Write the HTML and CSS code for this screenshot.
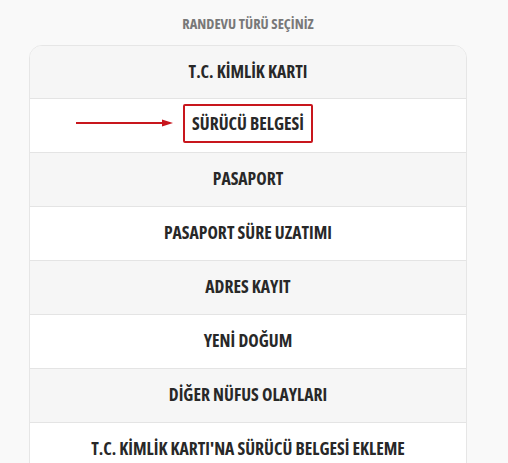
FILE: index.html
```html
<!DOCTYPE html>
<html lang="tr">
<head>
    <meta charset="UTF-8">
    <meta name="viewport" content="width=device-width, initial-scale=1.0">
    <title>Randevu Türü Seçiniz</title>
    <link rel="stylesheet" href="styles.css">
</head>
<body>
    <div class="page">
        <h1 class="page-title">RANDEVU TÜRÜ SEÇİNİZ</h1>
        <ul class="type-list">
            <li class="type-item">T.C. KİMLİK KARTI</li>
            <li class="type-item selected">
                <span class="arrow">
                    <svg width="98" height="10" viewBox="0 0 98 10">
                        <line x1="0" y1="5" x2="88" y2="5" stroke="#c8161d" stroke-width="2"/>
                        <path d="M86 1.5 L97 5 L86 8.5 Z" fill="#c8161d"/>
                    </svg>
                </span>
                <span class="mark">SÜRÜCÜ BELGESİ</span>
            </li>
            <li class="type-item">PASAPORT</li>
            <li class="type-item">PASAPORT SÜRE UZATIMI</li>
            <li class="type-item">ADRES KAYIT</li>
            <li class="type-item">YENİ DOĞUM</li>
            <li class="type-item">DİĞER NÜFUS OLAYLARI</li>
            <li class="type-item">T.C. KİMLİK KARTI'NA SÜRÜCÜ BELGESİ EKLEME</li>
        </ul>
    </div>
</body>
</html>
```

FILE: styles.css
```css
* {
    margin: 0;
    padding: 0;
    box-sizing: border-box;
}

body {
    background: #f9f9f9;
    font-family: 'Open Sans', 'DejaVu Sans', sans-serif;
    font-stretch: condensed;
    color: #282828;
}

.page {
    width: 438px;
    margin-left: 29px;
    padding-top: 14px;
}

.page-title {
    text-align: center;
    font-size: 14.5px;
    font-weight: 700;
    color: #787878;
    height: 31px;
}

.type-list {
    list-style: none;
    border: 1px solid #e6e6e6;
    border-radius: 13px 13px 0 0;
    overflow: hidden;
    background: #fff;
}

.type-item {
    position: relative;
    height: 54px;
    padding-bottom: 3px;
    display: flex;
    align-items: center;
    justify-content: center;
    font-size: 17.6px;
    font-weight: 700;
    border-bottom: 1px solid #e4e4e4;
    background: #fff;
}

.type-item:first-child {
    height: 53px;
}

.type-item:nth-child(odd) {
    background: #f6f6f6;
}

.mark {
    border: 2px solid #c8161d;
    border-radius: 2px;
    padding: 7px 7px;
    line-height: 21px;
    margin-bottom: 1px;
}

.arrow {
    position: absolute;
    left: 46px;
    top: 19px;
    display: flex;
}
```
